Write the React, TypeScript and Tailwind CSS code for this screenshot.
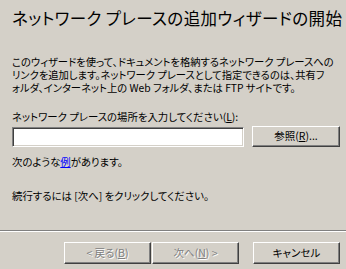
import React from "react";

const font = "font-['Noto_Sans_CJK_JP','Noto_Sans',sans-serif] [font-feature-settings:'palt']";

function WinButton({
  children,
  disabled,
  className = "",
}: {
  children: React.ReactNode;
  disabled?: boolean;
  className?: string;
}) {
  return (
    <button
      className={`flex items-center justify-center bg-[#d4d0c8] border border-t-white border-l-white border-b-[#404040] border-r-[#404040] shadow-[inset_-1px_-1px_0_#808080] text-[10.5px] leading-none ${
        disabled ? "text-[#808080] [text-shadow:1px_1px_0_#fff]" : "text-black"
      } ${className}`}
    >
      {children}
    </button>
  );
}

export default function App() {
  return (
    <div className={`w-[346px] h-[269px] bg-[#d4d0c8] text-black flex flex-col overflow-hidden ${font}`}>
      <div className="px-[12px] pt-[6px]">
        {/* Title */}
        <h1 className="text-[16.5px] leading-[24px] whitespace-nowrap tracking-[0.4px]">
          ネットワーク プレースの追加ウィザードの開始
        </h1>

        {/* Description */}
        <p className="mt-[25px] text-[10.3px] leading-[13px] whitespace-nowrap">
          このウィザードを使って、ドキュメントを格納するネットワーク プレースへの
          <br />
          リンクを追加します。ネットワーク プレースとして指定できるのは、共有フ
          <br />
          ォルダ、インターネット上の Web フォルダ、または FTP サイトです。
        </p>

        {/* Location input */}
        <div className="mt-[16px] text-[10.4px] leading-[13px] whitespace-nowrap">
          ネットワーク プレースの場所を入力してください(<span className="underline">L</span>):
        </div>
        <div className="mt-[3px] flex items-center gap-[8px] -mr-[6px]">
          <div className="w-[232px] h-[20px] bg-white border border-t-[#808080] border-l-[#808080] border-b-white border-r-white shadow-[inset_1px_1px_0_#404040,inset_-1px_-1px_0_#d4d0c8]" />
          <WinButton className="w-[88px] h-[21px]">
            参照(<span className="underline">R</span>)...
          </WinButton>
        </div>

        <div className="mt-[8px] text-[10.4px] leading-[13px] whitespace-nowrap">
          次のような<span className="text-[#0000ff] underline">例</span>があります。
        </div>

        <div className="mt-[21px] text-[10.4px] leading-[13px] whitespace-nowrap">
          続行するには [次へ] をクリックしてください。
        </div>
      </div>

      <div className="flex-1" />

      {/* Separator */}
      <div className="border-t border-t-[#808080] border-b border-b-white" />

      {/* Footer buttons */}
      <div className="flex justify-end items-center pt-[10px] pb-[5px] pr-[6px]">
        <WinButton disabled className="w-[87px] h-[22px]">
          &lt; 戻る(<span className="underline">B</span>)
        </WinButton>
        <WinButton disabled className="w-[87px] h-[22px] ml-[1px]">
          次へ(<span className="underline">N</span>) &gt;
        </WinButton>
        <WinButton className="w-[87px] h-[22px] ml-[14px]">キャンセル</WinButton>
      </div>
    </div>
  );
}
